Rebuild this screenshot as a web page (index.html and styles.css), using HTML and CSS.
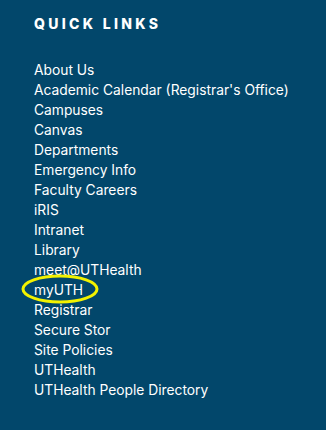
FILE: index.html
```html
<!DOCTYPE html>
<html>
<head>
    <title>Quick Links</title>
    <link rel="stylesheet" href="styles.css">
</head>
<body>
    <div class="quick-links">
        <h2 class="quick-links-title">Quick Links</h2>
        <ul class="link-list">
            <li><a href="#">About Us</a></li>
            <li><a href="#">Academic Calendar (Registrar's Office)</a></li>
            <li><a href="#">Campuses</a></li>
            <li><a href="#">Canvas</a></li>
            <li><a href="#">Departments</a></li>
            <li><a href="#">Emergency Info</a></li>
            <li><a href="#">Faculty Careers</a></li>
            <li><a href="#">iRIS</a></li>
            <li><a href="#">Intranet</a></li>
            <li><a href="#">Library</a></li>
            <li><a href="#">meet@UTHealth</a></li>
            <li class="marked">
                <a href="#">myUTH</a>
                <svg class="mark" width="80" height="32" viewBox="0 0 80 32">
                    <ellipse cx="40" cy="16" rx="37" ry="13" fill="none" stroke="#f2f200" stroke-width="3"/>
                </svg>
            </li>
            <li><a href="#">Registrar</a></li>
            <li><a href="#">Secure Stor</a></li>
            <li><a href="#">Site Policies</a></li>
            <li><a href="#">UTHealth</a></li>
            <li><a href="#">UTHealth People Directory</a></li>
        </ul>
    </div>
</body>
</html>
```

FILE: styles.css
```css
body {
    margin: 0;
    background: #02476b;
    font-family: 'Inter', 'Noto Sans', sans-serif;
    color: #fff;
}

.quick-links {
    padding: 15px 20px 20px 34px;
}

.quick-links-title {
    margin: 0 0 27px 0;
    font-size: 14px;
    font-weight: 800;
    letter-spacing: 3.3px;
    text-transform: uppercase;
    line-height: 18px;
}

.link-list {
    list-style: none;
    margin: 0;
    padding: 0;
}

.link-list li {
    line-height: 20px;
    font-size: 13.8px;
}

.link-list a {
    color: #fff;
    text-decoration: none;
}

.marked {
    position: relative;
}

.mark {
    position: absolute;
    left: -14px;
    top: -7px;
}
```
